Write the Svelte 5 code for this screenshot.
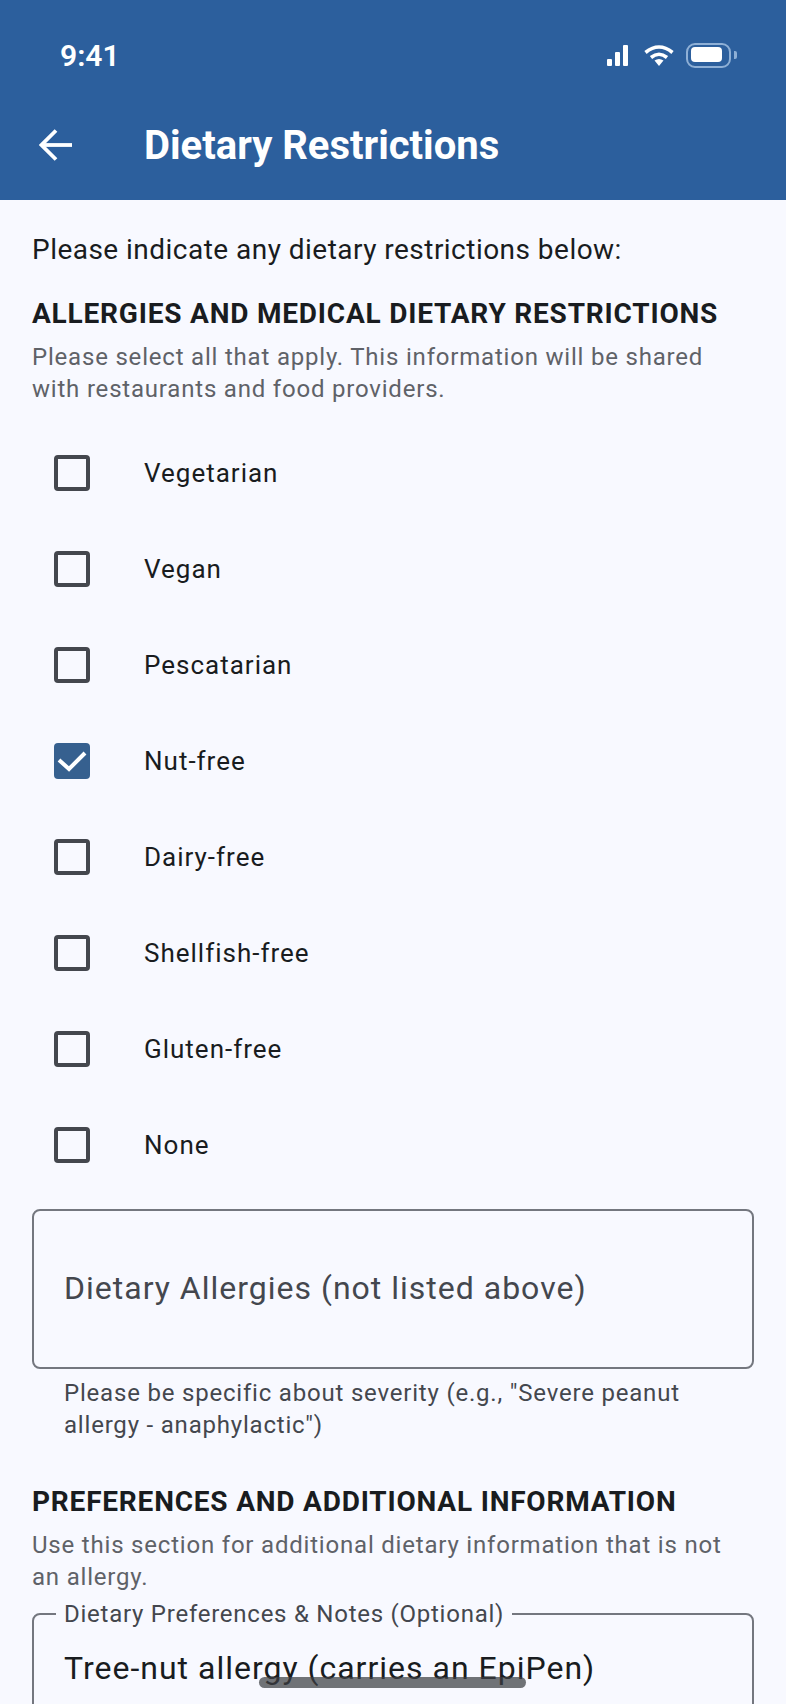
<script>
  // Checkbox options shown in the allergies section
  const options = [
    { label: 'Vegetarian', checked: false },
    { label: 'Vegan', checked: false },
    { label: 'Pescatarian', checked: false },
    { label: 'Nut-free', checked: true },
    { label: 'Dairy-free', checked: false },
    { label: 'Shellfish-free', checked: false },
    { label: 'Gluten-free', checked: false },
    { label: 'None', checked: false }
  ];
</script>

<div class="screen">
  <header class="header">
    <div class="status">
      <span class="time">9:41</span>
      <div class="status-icons">
        <svg class="signal" width="21" height="21" viewBox="0 0 21 21" fill="#fff">
          <rect x="0" y="14" width="5" height="7" rx="1" />
          <rect x="8" y="7" width="5" height="14" rx="1" />
          <rect x="16" y="0" width="5" height="21" rx="1" />
        </svg>
        <svg class="wifi" width="30" height="21" viewBox="0 0 30 21" fill="none" stroke="#fff" stroke-width="3.6">
          <path d="M1.5 7.5 Q15 -3.5 28.5 7.5" />
          <path d="M7 12.5 Q15 6 23 12.5" />
          <path d="M10.5 15.5 L15 21 L19.5 15.5 Q15 12.5 10.5 15.5 Z" fill="#fff" stroke="none" />
        </svg>
        <div class="battery">
          <div class="battery-body"><div class="battery-fill"></div></div>
          <div class="battery-cap"></div>
        </div>
      </div>
    </div>
    <div class="appbar">
      <svg class="back" width="34" height="32" viewBox="0 0 34 32" fill="none" stroke="#fff" stroke-width="3.8">
        <path d="M33 16 H3" />
        <path d="M17 1.5 L2.5 16 L17 30.5" />
      </svg>
      <h1>Dietary Restrictions</h1>
    </div>
  </header>

  <main class="content">
    <p class="intro">Please indicate any dietary restrictions below:</p>

    <h2>ALLERGIES AND MEDICAL DIETARY RESTRICTIONS</h2>
    <p class="sub">Please select all that apply. This information will be shared with restaurants and food providers.</p>

    <ul class="options">
      {#each options as option}
        <li class="option">
          <span class="box" class:checked={option.checked}>
            {#if option.checked}
              <svg width="36" height="36" viewBox="0 0 36 36" fill="none" stroke="#fff" stroke-width="4">
                <path d="M5 17 L15 26 L31 10" />
              </svg>
            {/if}
          </span>
          <span class="option-label">{option.label}</span>
        </li>
      {/each}
    </ul>

    <div class="input-empty">Dietary Allergies (not listed above)</div>
    <p class="helper">Please be specific about severity (e.g., "Severe peanut allergy - anaphylactic")</p>

    <h2 class="second">PREFERENCES AND ADDITIONAL INFORMATION</h2>
    <p class="sub">Use this section for additional dietary information that is not an allergy.</p>

    <fieldset class="input-filled">
      <legend>Dietary Preferences &amp; Notes (Optional)</legend>
      <span class="value">Tree-nut allergy (carries an EpiPen)</span>
    </fieldset>
  </main>

  <div class="home-indicator"></div>
</div>

<style>
  :global(body) {
    background: #f8f9ff;
  }

  .screen {
    position: relative;
    height: 1704px;
    overflow: hidden;
    background: #f8f9ff;
    font-family: Roboto, "Noto Sans", sans-serif;
    color: #191c20;
  }

  .header {
    height: 200px;
    background: #2c5f9d;
    color: #fff;
    display: flex;
    flex-direction: column;
  }

  .status {
    height: 110px;
    padding: 0 49px 0 60px;
    display: flex;
    align-items: center;
    justify-content: space-between;
  }

  .time {
    font-size: 30px;
    font-weight: 600;
  }

  .status-icons {
    display: flex;
    align-items: center;
  }

  .wifi {
    margin-left: 16px;
  }

  .battery {
    display: flex;
    align-items: center;
    gap: 3px;
    margin-left: 12px;
  }

  .battery-body {
    width: 45px;
    height: 25px;
    box-sizing: border-box;
    border: 2.5px solid #8fb0d6;
    border-radius: 9px;
    padding: 2.5px 3px;
  }

  .battery-fill {
    width: 31px;
    height: 15px;
    background: #fff;
    border-radius: 4px;
  }

  .battery-cap {
    width: 3px;
    height: 8px;
    background: #8fb0d6;
    border-radius: 0 2px 2px 0;
  }

  .appbar {
    height: 70px;
    display: flex;
    align-items: center;
    padding-left: 39px;
  }

  .back {
    flex: none;
  }

  h1 {
    margin: 0 0 0 71px;
    font-size: 40px;
    font-weight: 700;
  }

  .content {
    padding: 32px 32px 0;
  }

  .intro {
    margin: 0;
    font-size: 28px;
    line-height: 36px;
    letter-spacing: 0.47px;
  }

  h2 {
    margin: 28px 0 0;
    font-size: 28px;
    line-height: 36px;
    font-weight: 700;
    letter-spacing: 0.8px;
  }

  .second {
    margin-top: 43px;
  }

  .sub {
    margin: 9px 0 0;
    font-size: 24px;
    line-height: 32px;
    letter-spacing: 0.8px;
    color: #5f6268;
  }

  .options {
    list-style: none;
    margin: 20px 0 0;
    padding: 0;
  }

  .option {
    height: 96px;
    display: flex;
    align-items: center;
    padding-left: 22px;
  }

  .box {
    flex: none;
    width: 36px;
    height: 36px;
    box-sizing: border-box;
    border: 4px solid #44474e;
    border-radius: 4px;
    display: flex;
    align-items: center;
    justify-content: center;
  }

  .box.checked {
    background: #36608f;
    border: none;
  }

  .option-label {
    margin-left: 54px;
    font-size: 26px;
    letter-spacing: 1px;
  }

  .input-empty {
    margin-top: 16px;
    height: 160px;
    box-sizing: border-box;
    border: 2px solid #74777f;
    border-radius: 8px;
    padding: 0 0 2px 30px;
    display: flex;
    align-items: center;
    font-size: 32px;
    letter-spacing: 1px;
    color: #44474e;
  }

  .helper {
    margin: 8px 32px 0;
    font-size: 24px;
    line-height: 32px;
    letter-spacing: 0.8px;
    color: #44474e;
  }

  .input-filled {
    margin: 5px 0 0;
    padding: 19px 30px 60px;
    border: 2px solid #74777f;
    border-radius: 8px;
    font-size: 32px;
    letter-spacing: 1px;
  }

  legend {
    margin-left: -8px;
    padding: 0 8px;
    font-size: 24px;
    line-height: 32px;
    letter-spacing: 0.75px;
    color: #44474e;
  }

  .home-indicator {
    /* sits over the page content */
    position: absolute;
    left: 259px;
    top: 1677px;
    width: 267px;
    height: 11px;
    border-radius: 6px;
    background: rgba(60, 62, 66, 0.72);
  }
</style>
